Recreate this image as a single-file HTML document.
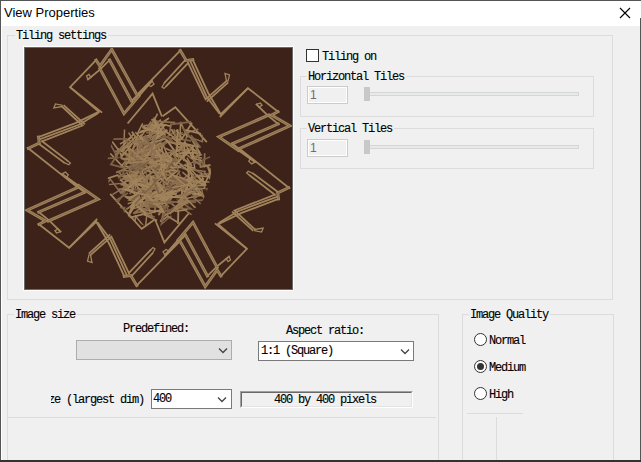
<!DOCTYPE html>
<html><head><meta charset="utf-8">
<style>
*{margin:0;padding:0;box-sizing:border-box}
html,body{width:641px;height:462px;overflow:hidden;background:#f0f0f0}
body{position:relative;font-family:"Liberation Mono",monospace;font-size:12px;color:#000}
.a{position:absolute}
.title{left:0;top:0;width:641px;height:26px;background:#fff;border-top:1px solid #555}
.ttext{left:4px;top:5px;font-family:"Liberation Sans",sans-serif;font-size:13px;color:#000;white-space:nowrap}
.gb{position:absolute;border:1px solid #dcdcdc}
.lbl{position:absolute;-webkit-text-stroke:0.12px #000;background:#f0f0f0;white-space:nowrap;letter-spacing:-1.2px;line-height:12px;padding:0 2px 0 1px}
.t{position:absolute;-webkit-text-stroke:0.12px #000;white-space:nowrap;letter-spacing:-1.2px;line-height:12px}
.edit{position:absolute;border:1px solid #cccccc;background:#f0f0f0;box-shadow:inset 1px 1px 0 #fff, inset -1px -1px 0 #fff}
.thumb{position:absolute;background:#c8c8c8}
.track{position:absolute;background:#e7eaea;border:1px solid #d6d6d6}
.combo{position:absolute;border:1px solid #7a7a7a;background:#fff}
.chev{position:absolute}
.radio{position:absolute;width:13px;height:13px;border:1px solid #333;border-radius:50%;background:#fff}
</style></head><body>
<div class="a title"></div>
<div class="a ttext">View Properties</div>
<!-- close X -->
<svg class="a" style="left:619px;top:7px" width="12" height="12" viewBox="0 0 12 12"><path d="M1 1L11 11M11 1L1 11" stroke="#000" stroke-width="1.1"/></svg>
<!-- right border -->
<div class="a" style="left:640px;top:18px;width:1px;height:444px;background:#555"></div>
<div class="a" style="left:0;top:0;width:1px;height:462px;background:#555"></div>
<div class="a" style="left:1px;top:26px;width:1px;height:436px;background:#fff"></div>


<!-- Tiling settings group -->
<div class="gb" style="left:7px;top:35px;width:606px;height:265px"></div>
<div class="lbl" style="left:15px;top:30px">Tiling settings</div>

<!-- image -->
<div class="a" style="left:23px;top:46px;width:271px;height:245px;background:#3c2218;border:1px solid #fff;box-shadow:inset 0 0 0 1px #6a6a6a"></div>
<svg class="a" style="left:25px;top:48px" width="267" height="241" viewBox="25 48 267 241" shape-rendering="auto">
<rect x="25" y="48" width="267" height="241" fill="#3c2218"/>
<g fill="none" stroke="#a2845c" stroke-linejoin="miter" stroke-linecap="square">
<path d="M101.4 112.1 L70.1 87.2 L96.1 60.1" stroke-width="1.8"/>
<path d="M96.1 60.1 L99.9 66.1 L111.8 49.4 L137.0 95.0" stroke-width="3.0"/>
<path d="M137.0 95.0 L180.3 50.5" stroke-width="1.8"/>
<path d="M180.3 50.5 L186.2 60.4 L192.7 59.7" stroke-width="3.0"/>
<path d="M192.7 59.7 L208.2 93.0 L220.8 114.2" stroke-width="1.8"/>
<path d="M190.4 61.3 L206.7 96.7 L219.0 113.0" stroke-width="1.8"/>
<path d="M220.8 114.2 L247.5 88.6" stroke-width="1.8"/>
<path d="M88.0 79.5 L99.9 69.7 L109.6 60.0" stroke-width="1.8"/>
<path d="M109.6 60.0 L131.5 101.0" stroke-width="3.0"/>
<path d="M131.5 101.0 L148.0 85.0" stroke-width="1.8"/>
<path d="M99.9 68.6 L124.0 113.6 L139.0 96.0" stroke-width="3.0"/>
<path d="M139.0 96.0 L152.0 81.0" stroke-width="1.8"/>
<path d="M164.7 82.5 L185.5 59.7" stroke-width="1.8"/>
<path d="M166.7 85.7 L188.1 63.0" stroke-width="1.8"/>
<path d="M188.1 63.0 L205.6 99.4 L226.5 81.0" stroke-width="1.8"/>
<path d="M207.5 101.0 L227.5 83.0" stroke-width="1.8"/>
<path d="M88.0 79.5 L86.5 76.0 L89.0 74.5 L91.0 77.5" stroke-width="1.3"/>
<path d="M152.0 81.0 L154.0 84.0 L151.0 86.5 L148.0 85.0" stroke-width="1.3"/>
<path d="M164.7 82.5 L162.0 87.0 L164.0 88.5 L166.7 85.7" stroke-width="1.3"/>
<path d="M226.5 81.0 L225.0 73.5 L229.5 75.0 L228.0 81.0" stroke-width="1.3"/>
<path d="M220.4 116.5 L248.0 88.2 L278.0 111.7" stroke-width="1.8"/>
<path d="M278.0 111.7 L271.4 115.1 L289.9 125.8 L239.4 148.6" stroke-width="3.0"/>
<path d="M239.4 148.6 L288.7 187.7" stroke-width="1.8"/>
<path d="M288.7 187.7 L277.7 193.0 L278.5 198.9" stroke-width="3.0"/>
<path d="M278.5 198.9 L241.6 212.9 L218.1 224.2" stroke-width="1.8"/>
<path d="M276.7 196.8 L237.5 211.5 L219.4 222.6" stroke-width="1.8"/>
<path d="M218.1 224.2 L246.5 248.3" stroke-width="1.8"/>
<path d="M256.5 104.4 L267.4 115.1 L278.2 123.9" stroke-width="1.8"/>
<path d="M278.2 123.9 L232.7 143.6" stroke-width="3.0"/>
<path d="M232.7 143.6 L250.5 158.5" stroke-width="1.8"/>
<path d="M268.6 115.1 L218.8 136.9 L238.3 150.4" stroke-width="3.0"/>
<path d="M238.3 150.4 L254.9 162.1" stroke-width="1.8"/>
<path d="M253.2 173.6 L278.5 192.4" stroke-width="1.8"/>
<path d="M249.7 175.4 L274.8 194.7" stroke-width="1.8"/>
<path d="M274.8 194.7 L234.5 210.5 L254.9 229.4" stroke-width="1.8"/>
<path d="M232.7 212.2 L252.7 230.3" stroke-width="1.8"/>
<path d="M256.5 104.4 L260.4 103.0 L262.1 105.3 L258.8 107.1" stroke-width="1.3"/>
<path d="M254.9 162.1 L251.6 163.9 L248.8 161.2 L250.5 158.5" stroke-width="1.3"/>
<path d="M253.2 173.6 L248.2 171.2 L246.6 173.0 L249.7 175.4" stroke-width="1.3"/>
<path d="M254.9 229.4 L263.2 228.0 L261.5 232.1 L254.9 230.7" stroke-width="1.3"/>
<path d="M215.6 223.9 L246.9 248.8 L220.9 275.9" stroke-width="1.8"/>
<path d="M220.9 275.9 L217.1 269.9 L205.2 286.6 L180.0 241.0" stroke-width="3.0"/>
<path d="M180.0 241.0 L136.7 285.5" stroke-width="1.8"/>
<path d="M136.7 285.5 L130.8 275.6 L124.3 276.3" stroke-width="3.0"/>
<path d="M124.3 276.3 L108.8 243.0 L96.2 221.8" stroke-width="1.8"/>
<path d="M126.6 274.7 L110.3 239.3 L98.0 223.0" stroke-width="1.8"/>
<path d="M96.2 221.8 L69.5 247.4" stroke-width="1.8"/>
<path d="M229.0 256.5 L217.1 266.3 L207.4 276.0" stroke-width="1.8"/>
<path d="M207.4 276.0 L185.5 235.0" stroke-width="3.0"/>
<path d="M185.5 235.0 L169.0 251.0" stroke-width="1.8"/>
<path d="M217.1 267.4 L193.0 222.4 L178.0 240.0" stroke-width="3.0"/>
<path d="M178.0 240.0 L165.0 255.0" stroke-width="1.8"/>
<path d="M152.3 253.5 L131.5 276.3" stroke-width="1.8"/>
<path d="M150.3 250.3 L128.9 273.0" stroke-width="1.8"/>
<path d="M128.9 273.0 L111.4 236.6 L90.5 255.0" stroke-width="1.8"/>
<path d="M109.5 235.0 L89.5 253.0" stroke-width="1.8"/>
<path d="M229.0 256.5 L230.5 260.0 L228.0 261.5 L226.0 258.5" stroke-width="1.3"/>
<path d="M165.0 255.0 L163.0 252.0 L166.0 249.5 L169.0 251.0" stroke-width="1.3"/>
<path d="M152.3 253.5 L155.0 249.0 L153.0 247.5 L150.3 250.3" stroke-width="1.3"/>
<path d="M90.5 255.0 L92.0 262.5 L87.5 261.0 L89.0 255.0" stroke-width="1.3"/>
<path d="M96.6 219.5 L69.0 247.8 L39.0 224.3" stroke-width="1.8"/>
<path d="M39.0 224.3 L45.6 220.9 L27.1 210.2 L77.6 187.4" stroke-width="3.0"/>
<path d="M77.6 187.4 L28.3 148.3" stroke-width="1.8"/>
<path d="M28.3 148.3 L39.3 143.0 L38.5 137.1" stroke-width="3.0"/>
<path d="M38.5 137.1 L75.4 123.1 L98.9 111.8" stroke-width="1.8"/>
<path d="M40.3 139.2 L79.5 124.5 L97.6 113.4" stroke-width="1.8"/>
<path d="M98.9 111.8 L70.5 87.7" stroke-width="1.8"/>
<path d="M60.5 231.6 L49.6 220.9 L38.8 212.1" stroke-width="1.8"/>
<path d="M38.8 212.1 L84.3 192.4" stroke-width="3.0"/>
<path d="M84.3 192.4 L66.5 177.5" stroke-width="1.8"/>
<path d="M48.4 220.9 L98.2 199.1 L78.7 185.6" stroke-width="3.0"/>
<path d="M78.7 185.6 L62.1 173.9" stroke-width="1.8"/>
<path d="M63.8 162.4 L38.5 143.6" stroke-width="1.8"/>
<path d="M67.3 160.6 L42.2 141.3" stroke-width="1.8"/>
<path d="M42.2 141.3 L82.5 125.5 L62.1 106.6" stroke-width="1.8"/>
<path d="M84.3 123.8 L64.3 105.7" stroke-width="1.8"/>
<path d="M60.5 231.6 L56.6 233.0 L54.9 230.7 L58.2 228.9" stroke-width="1.3"/>
<path d="M62.1 173.9 L65.4 172.1 L68.2 174.8 L66.5 177.5" stroke-width="1.3"/>
<path d="M63.8 162.4 L68.8 164.8 L70.4 163.0 L67.3 160.6" stroke-width="1.3"/>
<path d="M62.1 106.6 L53.8 108.0 L55.5 103.9 L62.1 105.3" stroke-width="1.3"/>
<path d="M128.2 122.8 L152.6 93.6 L161.6 115.7" stroke-width="1.8"/>
<path d="M163.3 115.7 L175.3 107.2 L206.2 141.5" stroke-width="1.8"/>
<path d="M188.8 213.2 L164.4 242.4 L155.4 220.3" stroke-width="1.8"/>
<path d="M153.7 220.3 L141.7 228.8 L110.8 194.5" stroke-width="1.8"/>
<clipPath id="bc"><ellipse cx="159" cy="168" rx="52.0" ry="60.0"/></clipPath>
<g clip-path="url(#bc)">
<path d="M155.0 173.0 L167.1 184.7 L172.9 173.9 L153.1 178.8" stroke-width="1.7" stroke="#9a7c56"/>
<path d="M171.9 178.6 L186.1 186.9 L172.0 195.0" stroke-width="1.9" stroke="#7d6246"/>
<path d="M159.0 183.2 L160.6 195.5 L166.2 189.2" stroke-width="1.7" stroke="#9a7c56"/>
<path d="M174.5 138.4 L190.3 140.7" stroke-width="1.7" stroke="#7d6246"/>
<path d="M124.3 150.3 L115.5 151.3" stroke-width="1.9" stroke="#8c7050"/>
<path d="M154.6 136.1 L162.3 134.0 L155.6 138.8" stroke-width="1.9" stroke="#a2845c"/>
<path d="M154.1 118.0 L158.8 124.7 L144.5 125.4" stroke-width="1.5" stroke="#9a7c56"/>
<path d="M132.4 132.4 L144.2 149.0 L147.3 140.1 L136.5 144.3" stroke-width="1.9" stroke="#9a7c56"/>
<path d="M141.6 134.5 L134.6 143.0 L143.3 140.6" stroke-width="1.5" stroke="#a2845c"/>
<path d="M131.8 153.9 L121.2 166.2 L134.2 166.7" stroke-width="1.5" stroke="#a2845c"/>
<path d="M157.5 190.0 L167.8 206.1 L150.2 206.6" stroke-width="1.7" stroke="#a2845c"/>
<path d="M189.5 174.3 L183.0 189.9" stroke-width="1.9" stroke="#7d6246"/>
<path d="M149.6 190.5 L145.5 206.4 L126.2 197.0" stroke-width="1.9" stroke="#9a7c56"/>
<path d="M142.3 184.8 L162.6 187.1 L155.1 195.8 L158.0 177.5" stroke-width="1.7" stroke="#8c7050"/>
<path d="M166.0 148.6 L183.7 156.7 L181.2 145.2" stroke-width="1.7" stroke="#9a7c56"/>
<path d="M173.5 188.6 L162.3 202.1" stroke-width="1.7" stroke="#a2845c"/>
<path d="M170.8 157.5 L182.6 165.5" stroke-width="1.9" stroke="#8c7050"/>
<path d="M133.7 164.5 L143.9 170.5 L123.6 176.8" stroke-width="1.9" stroke="#8c7050"/>
<path d="M177.7 130.0 L167.1 136.8 L182.2 150.1 L188.8 130.6" stroke-width="1.9" stroke="#7d6246"/>
<path d="M139.0 188.8 L153.7 187.2 L143.8 169.6" stroke-width="1.5" stroke="#7d6246"/>
<path d="M174.7 208.6 L190.8 208.8 L179.2 200.6 L195.0 202.1" stroke-width="1.9" stroke="#7d6246"/>
<path d="M143.2 155.1 L136.8 163.8 L153.2 162.7 L147.0 156.8" stroke-width="1.9" stroke="#a2845c"/>
<path d="M158.2 186.1 L169.1 189.7 L160.9 201.1" stroke-width="1.5" stroke="#8c7050"/>
<path d="M152.2 119.9 L157.4 126.3 L144.6 128.5" stroke-width="1.9" stroke="#a2845c"/>
<path d="M188.6 179.4 L203.2 174.3 L185.8 164.6" stroke-width="1.9" stroke="#7d6246"/>
<path d="M192.8 148.6 L204.1 165.7 L204.7 154.1" stroke-width="1.7" stroke="#8c7050"/>
<path d="M133.9 179.8 L120.8 192.0" stroke-width="1.9" stroke="#8c7050"/>
<path d="M184.4 165.2 L194.7 168.2 L192.6 148.5" stroke-width="1.5" stroke="#a2845c"/>
<path d="M128.3 185.1 L121.0 193.3 L110.2 179.1 L102.6 191.3" stroke-width="1.5" stroke="#8c7050"/>
<path d="M125.0 196.2 L139.5 200.1 L128.4 203.5" stroke-width="1.5" stroke="#9a7c56"/>
<path d="M128.2 150.0 L135.0 155.9 L126.2 159.2" stroke-width="1.9" stroke="#a2845c"/>
<path d="M173.0 150.8 L190.7 149.4 L183.2 153.0" stroke-width="1.7" stroke="#9a7c56"/>
<path d="M150.7 122.0 L139.0 140.1 L157.7 135.0 L142.9 125.9" stroke-width="1.5" stroke="#9a7c56"/>
<path d="M156.6 133.9 L171.3 138.6 L162.1 146.4" stroke-width="1.7" stroke="#7d6246"/>
<path d="M166.2 180.3 L182.2 178.2" stroke-width="1.5" stroke="#9a7c56"/>
<path d="M177.4 142.1 L198.6 146.8 L193.3 138.8" stroke-width="1.5" stroke="#a2845c"/>
<path d="M147.0 132.5 L165.8 133.8 L149.5 125.5" stroke-width="1.9" stroke="#7d6246"/>
<path d="M182.9 179.5 L197.5 191.0 L190.2 177.8" stroke-width="1.5" stroke="#a2845c"/>
<path d="M135.7 144.8 L127.3 156.9 L142.2 158.1 L134.7 153.0" stroke-width="1.9" stroke="#8c7050"/>
<path d="M154.3 191.7 L145.4 204.6 L158.6 204.4" stroke-width="1.7" stroke="#a2845c"/>
<path d="M162.7 160.2 L160.0 172.3" stroke-width="1.7" stroke="#7d6246"/>
<path d="M140.8 131.3 L154.4 127.6 L150.2 137.8" stroke-width="1.7" stroke="#a2845c"/>
<path d="M147.5 156.6 L156.0 162.7 L144.2 160.9" stroke-width="1.5" stroke="#8c7050"/>
<path d="M164.7 213.6 L160.5 221.8 L167.8 216.3" stroke-width="1.9" stroke="#9a7c56"/>
<path d="M137.6 139.0 L123.7 149.5 L124.5 130.3" stroke-width="1.5" stroke="#9a7c56"/>
<path d="M148.8 125.9 L150.3 139.7" stroke-width="1.5" stroke="#8c7050"/>
<path d="M131.1 137.4 L120.6 143.7" stroke-width="1.5" stroke="#a2845c"/>
<path d="M157.4 197.0 L171.6 197.9 L158.9 214.3" stroke-width="1.9" stroke="#9a7c56"/>
<path d="M188.7 165.5 L194.7 184.6 L173.5 186.3 L190.7 177.9" stroke-width="1.5" stroke="#8c7050"/>
<path d="M193.0 162.0 L183.4 168.5 L205.1 171.5" stroke-width="1.5" stroke="#8c7050"/>
<path d="M165.0 134.8 L155.6 148.5 L171.1 140.0" stroke-width="1.9" stroke="#7d6246"/>
<path d="M133.2 185.2 L154.4 183.9 L148.5 196.3" stroke-width="1.9" stroke="#a2845c"/>
<path d="M147.2 185.7 L154.9 188.4 L141.0 193.0 L147.3 180.0" stroke-width="1.9" stroke="#8c7050"/>
<path d="M169.7 210.7 L162.2 218.3 L164.2 205.8" stroke-width="1.9" stroke="#7d6246"/>
<path d="M154.5 155.2 L161.6 163.3 L158.3 147.3" stroke-width="1.5" stroke="#8c7050"/>
<path d="M199.9 160.4 L214.2 172.5 L193.7 176.4" stroke-width="1.9" stroke="#7d6246"/>
<path d="M172.5 177.9 L183.3 178.5 L166.3 188.1 L178.9 197.1" stroke-width="1.7" stroke="#8c7050"/>
<path d="M165.2 136.8 L146.8 140.7 L156.4 153.6" stroke-width="1.7" stroke="#7d6246"/>
<path d="M155.9 129.4 L145.6 130.3 L152.0 123.0" stroke-width="1.7" stroke="#8c7050"/>
<path d="M180.7 153.3 L199.6 152.7 L190.9 137.7" stroke-width="1.9" stroke="#a2845c"/>
<path d="M130.3 158.2 L123.9 167.9 L110.9 154.1" stroke-width="1.7" stroke="#a2845c"/>
<path d="M156.5 158.1 L175.9 161.6 L166.9 165.0 L182.2 166.4" stroke-width="1.5" stroke="#7d6246"/>
<path d="M193.2 146.6 L185.7 155.2" stroke-width="1.7" stroke="#a2845c"/>
<path d="M157.0 127.5 L137.6 133.2 L142.4 124.0" stroke-width="1.5" stroke="#a2845c"/>
<path d="M160.6 130.0 L152.0 139.1" stroke-width="1.7" stroke="#9a7c56"/>
<path d="M128.9 186.2 L122.0 193.5 L125.0 183.1 L105.4 184.9" stroke-width="1.5" stroke="#8c7050"/>
<path d="M170.4 186.8 L168.1 198.9" stroke-width="1.7" stroke="#9a7c56"/>
<path d="M176.9 130.5 L182.0 138.7 L191.6 123.4" stroke-width="1.7" stroke="#a2845c"/>
<path d="M166.6 139.9 L179.3 157.5 L171.4 153.1 L166.2 168.5" stroke-width="1.9" stroke="#a2845c"/>
<path d="M132.9 134.9 L118.9 150.4 L106.4 134.2 L98.2 147.6" stroke-width="1.7" stroke="#a2845c"/>
<path d="M160.4 167.6 L166.5 174.9 L152.8 178.7" stroke-width="1.9" stroke="#8c7050"/>
<path d="M138.8 171.4 L120.7 180.4 L134.4 189.7 L119.4 189.1" stroke-width="1.5" stroke="#a2845c"/>
<path d="M170.7 174.9 L160.9 190.9 L147.6 176.6" stroke-width="1.5" stroke="#8c7050"/>
<path d="M158.7 182.9 L165.8 189.7" stroke-width="1.7" stroke="#a2845c"/>
<path d="M161.1 126.1 L169.4 134.2 L170.9 125.1" stroke-width="1.7" stroke="#8c7050"/>
<path d="M120.3 157.3 L137.4 167.9 L137.0 148.9 L127.8 155.7" stroke-width="1.7" stroke="#8c7050"/>
<path d="M166.9 193.0 L182.1 189.5 L181.6 207.2" stroke-width="1.9" stroke="#a2845c"/>
<path d="M160.6 191.2 L160.3 200.0 L149.6 196.0" stroke-width="1.7" stroke="#9a7c56"/>
<path d="M154.8 202.5 L141.0 211.6 L137.4 202.2 L127.0 208.9" stroke-width="1.9" stroke="#8c7050"/>
<path d="M160.4 171.8 L151.4 182.1 L149.7 169.2 L139.2 176.6" stroke-width="1.5" stroke="#9a7c56"/>
<path d="M164.5 197.9 L178.0 208.8 L163.0 216.4" stroke-width="1.5" stroke="#9a7c56"/>
<path d="M158.4 166.0 L172.8 163.2 L160.7 149.8" stroke-width="1.7" stroke="#8c7050"/>
<path d="M157.2 142.7 L138.6 151.9 L138.6 138.7" stroke-width="1.7" stroke="#7d6246"/>
<path d="M144.2 154.3 L165.4 156.4 L160.0 173.5" stroke-width="1.9" stroke="#a2845c"/>
<path d="M169.1 158.1 L177.4 160.3 L170.5 150.7 L192.1 149.2" stroke-width="1.7" stroke="#8c7050"/>
<path d="M138.7 139.0 L154.4 133.3" stroke-width="1.5" stroke="#a2845c"/>
<path d="M143.3 188.6 L153.9 201.5 L142.5 197.6" stroke-width="1.9" stroke="#9a7c56"/>
<path d="M136.9 141.9 L147.1 158.5" stroke-width="1.7" stroke="#9a7c56"/>
<path d="M120.4 179.2 L138.4 177.9 L130.1 193.4" stroke-width="1.5" stroke="#8c7050"/>
<path d="M164.7 159.1 L173.4 169.0 L163.3 172.2" stroke-width="1.9" stroke="#8c7050"/>
<path d="M139.5 144.1 L146.1 151.9" stroke-width="1.5" stroke="#7d6246"/>
<path d="M146.9 170.8 L159.8 173.9 L144.4 187.0" stroke-width="1.9" stroke="#9a7c56"/>
<path d="M149.7 186.4 L146.8 206.5 L135.5 201.1" stroke-width="1.9" stroke="#8c7050"/>
<path d="M140.0 157.0 L144.7 164.6 L137.1 162.0" stroke-width="1.5" stroke="#9a7c56"/>
<path d="M157.7 158.5 L152.1 167.5 L153.5 145.6" stroke-width="1.9" stroke="#a2845c"/>
<path d="M123.3 152.9 L139.9 166.5" stroke-width="1.7" stroke="#8c7050"/>
<path d="M183.6 190.5 L187.8 203.5 L167.2 201.0 L167.8 211.0" stroke-width="1.7" stroke="#7d6246"/>
<path d="M185.1 153.5 L177.8 162.6" stroke-width="1.5" stroke="#a2845c"/>
<path d="M179.4 171.6 L171.8 183.4 L180.5 183.2" stroke-width="1.9" stroke="#8c7050"/>
<path d="M122.6 175.9 L140.6 181.6 L134.7 174.9 L146.0 180.3" stroke-width="1.9" stroke="#a2845c"/>
<path d="M129.4 180.5 L144.5 181.7 L140.4 163.8 L153.8 169.6" stroke-width="1.7" stroke="#a2845c"/>
<path d="M160.3 120.2 L148.8 130.6 L157.2 114.4" stroke-width="1.7" stroke="#9a7c56"/>
<path d="M180.2 206.7 L195.8 217.9" stroke-width="1.5" stroke="#8c7050"/>
<path d="M190.1 188.2 L204.9 188.5 L201.4 173.2" stroke-width="1.5" stroke="#9a7c56"/>
<path d="M188.8 194.1 L181.2 199.6 L202.1 195.2" stroke-width="1.5" stroke="#9a7c56"/>
<path d="M132.3 155.9 L145.7 171.0 L147.6 149.2" stroke-width="1.7" stroke="#7d6246"/>
<path d="M172.3 137.9 L181.7 145.1 L165.7 141.1" stroke-width="1.5" stroke="#a2845c"/>
<path d="M175.1 190.6 L166.2 200.4 L162.7 191.2 L162.1 204.0" stroke-width="1.9" stroke="#a2845c"/>
<path d="M140.9 204.3 L151.7 203.9 L141.7 214.1 L154.1 216.8" stroke-width="1.7" stroke="#7d6246"/>
<path d="M168.3 118.5 L160.5 123.8 L169.6 125.9" stroke-width="1.7" stroke="#a2845c"/>
<path d="M148.5 189.3 L141.1 201.9 L131.5 190.2" stroke-width="1.9" stroke="#a2845c"/>
<path d="M186.6 182.0 L201.9 181.6 L188.9 166.9" stroke-width="1.5" stroke="#a2845c"/>
<path d="M131.0 181.9 L144.7 184.9" stroke-width="1.7" stroke="#a2845c"/>
<path d="M126.1 158.3 L123.1 174.0" stroke-width="1.9" stroke="#7d6246"/>
<path d="M141.7 194.7 L157.2 191.7 L154.7 212.1" stroke-width="1.9" stroke="#8c7050"/>
<path d="M151.1 178.2 L160.6 193.9" stroke-width="1.9" stroke="#a2845c"/>
<path d="M151.0 166.3 L163.0 168.7 L160.6 159.4 L174.9 163.3" stroke-width="1.9" stroke="#a2845c"/>
<path d="M150.1 146.9 L163.1 146.3 L158.7 154.9 L158.3 146.0" stroke-width="1.7" stroke="#8c7050"/>
<path d="M173.7 188.3 L186.9 188.5" stroke-width="1.9" stroke="#7d6246"/>
<path d="M197.7 153.6 L194.5 163.6 L211.5 156.3" stroke-width="1.5" stroke="#7d6246"/>
<path d="M166.5 197.8 L153.2 200.2" stroke-width="1.7" stroke="#a2845c"/>
<path d="M143.7 198.9 L130.5 209.3 L146.9 205.2 L131.6 196.7" stroke-width="1.5" stroke="#9a7c56"/>
<path d="M152.1 185.0 L165.2 187.6 L148.2 196.6" stroke-width="1.9" stroke="#a2845c"/>
<path d="M146.9 200.2 L141.1 207.5 L137.8 188.1" stroke-width="1.7" stroke="#9a7c56"/>
<path d="M151.2 206.7 L166.4 206.6 L161.3 224.3 L170.9 216.2" stroke-width="1.5" stroke="#7d6246"/>
<path d="M148.7 197.3 L161.6 209.6 L144.6 214.7 L156.3 220.2" stroke-width="1.7" stroke="#a2845c"/>
<path d="M184.4 142.5 L201.1 154.8 L192.1 158.1 L201.2 160.5" stroke-width="1.5" stroke="#a2845c"/>
<path d="M130.4 166.0 L120.6 171.9" stroke-width="1.5" stroke="#7d6246"/>
<path d="M127.1 193.5 L109.1 204.9" stroke-width="1.9" stroke="#7d6246"/>
<path d="M126.3 152.8 L134.4 165.2 L116.6 172.2" stroke-width="1.5" stroke="#8c7050"/>
<path d="M168.2 171.4 L161.5 177.0 L163.9 161.6" stroke-width="1.7" stroke="#7d6246"/>
<path d="M178.3 211.4 L178.0 223.6" stroke-width="1.9" stroke="#a2845c"/>
<path d="M133.4 153.7 L144.8 161.5" stroke-width="1.9" stroke="#a2845c"/>
<path d="M153.7 184.9 L163.3 187.6 L163.5 172.8 L151.8 176.4" stroke-width="1.7" stroke="#8c7050"/>
<path d="M158.1 176.1 L146.3 194.0 L158.0 197.5" stroke-width="1.5" stroke="#9a7c56"/>
<path d="M174.8 169.0 L169.4 190.0 L181.4 185.6" stroke-width="1.5" stroke="#7d6246"/>
<path d="M121.0 154.0 L131.8 155.1 L126.9 141.2" stroke-width="1.9" stroke="#7d6246"/>
<path d="M167.0 174.4 L156.0 187.9 L165.1 187.4" stroke-width="1.5" stroke="#9a7c56"/>
<path d="M163.8 130.8 L179.9 140.9 L180.5 121.9 L186.9 136.4" stroke-width="1.5" stroke="#a2845c"/>
<path d="M158.9 155.0 L179.5 150.7 L178.4 160.6" stroke-width="1.5" stroke="#8c7050"/>
<path d="M128.4 184.8 L110.6 195.8" stroke-width="1.5" stroke="#8c7050"/>
<path d="M177.9 184.6 L198.9 181.3 L191.9 177.0" stroke-width="1.9" stroke="#8c7050"/>
<path d="M130.5 150.0 L146.0 155.4 L137.1 161.2" stroke-width="1.5" stroke="#9a7c56"/>
<path d="M181.1 157.1 L187.9 161.8" stroke-width="1.7" stroke="#a2845c"/>
<path d="M156.1 135.3 L150.1 145.1 L143.8 137.3 L160.0 136.4" stroke-width="1.7" stroke="#8c7050"/>
<path d="M173.9 179.2 L159.3 194.3 L153.3 179.3" stroke-width="1.7" stroke="#7d6246"/>
<path d="M170.7 180.4 L187.7 183.3" stroke-width="1.9" stroke="#9a7c56"/>
<path d="M121.7 148.9 L130.4 146.0" stroke-width="1.7" stroke="#a2845c"/>
<path d="M138.4 207.3 L148.0 210.4 L133.3 213.4 L147.1 203.4" stroke-width="1.9" stroke="#8c7050"/>
<path d="M174.5 196.7 L192.1 192.7 L184.0 191.0" stroke-width="1.9" stroke="#9a7c56"/>
<path d="M195.3 181.4 L206.2 185.2 L189.5 185.7" stroke-width="1.9" stroke="#a2845c"/>
<path d="M153.6 157.8 L164.6 155.9 L163.6 176.3 L158.1 166.5" stroke-width="1.9" stroke="#9a7c56"/>
<path d="M143.5 144.3 L127.3 157.6 L146.9 166.0" stroke-width="1.5" stroke="#7d6246"/>
<path d="M126.2 138.8 L107.6 139.2 L117.7 157.7 L105.2 158.6" stroke-width="1.7" stroke="#7d6246"/>
<path d="M161.3 211.9 L170.8 210.1" stroke-width="1.7" stroke="#7d6246"/>
<path d="M166.2 159.0 L179.5 167.4 L163.3 167.5" stroke-width="1.9" stroke="#a2845c"/>
<path d="M176.3 162.7 L178.0 170.5" stroke-width="1.7" stroke="#8c7050"/>
<path d="M200.6 166.8 L209.7 165.2" stroke-width="1.9" stroke="#9a7c56"/>
<path d="M150.8 155.3 L164.3 172.5 L149.3 164.7 L158.4 158.4" stroke-width="1.5" stroke="#7d6246"/>
<path d="M139.5 137.7 L129.6 155.3 L144.1 153.3 L132.5 166.4" stroke-width="1.5" stroke="#8c7050"/>
<path d="M141.9 189.4 L129.3 199.9 L150.8 202.9" stroke-width="1.7" stroke="#a2845c"/>
<path d="M187.6 151.4 L175.3 165.3 L166.1 152.1" stroke-width="1.7" stroke="#a2845c"/>
<path d="M166.6 188.2 L188.1 184.4 L173.4 177.6" stroke-width="1.9" stroke="#7d6246"/>
<path d="M161.4 166.5 L146.8 176.1 L161.0 178.7 L143.6 191.1" stroke-width="1.5" stroke="#a2845c"/>
<path d="M117.8 171.6 L129.9 182.1 L129.6 168.6" stroke-width="1.7" stroke="#8c7050"/>
<path d="M193.5 180.7 L213.4 182.4 L204.6 172.8" stroke-width="1.5" stroke="#9a7c56"/>
<path d="M140.6 167.5 L125.5 181.2 L145.8 177.0 L133.2 166.4" stroke-width="1.7" stroke="#8c7050"/>
<path d="M157.2 122.9 L157.5 135.4" stroke-width="1.7" stroke="#9a7c56"/>
<path d="M131.8 144.3 L121.7 156.5 L118.2 149.2" stroke-width="1.5" stroke="#a2845c"/>
<path d="M147.6 158.6 L160.4 167.7 L145.4 168.5" stroke-width="1.7" stroke="#7d6246"/>
<path d="M156.4 169.9 L155.1 182.0 L161.4 176.2" stroke-width="1.5" stroke="#7d6246"/>
<path d="M190.0 200.6 L210.3 200.0 L207.1 189.0" stroke-width="1.9" stroke="#7d6246"/>
<path d="M147.0 212.5 L145.4 228.3 L135.6 216.1 L134.4 226.5" stroke-width="1.5" stroke="#9a7c56"/>
<path d="M135.2 161.7 L133.7 172.7" stroke-width="1.5" stroke="#7d6246"/>
<path d="M145.0 212.8 L152.4 217.6 L146.1 200.7" stroke-width="1.9" stroke="#8c7050"/>
<path d="M191.5 181.5 L177.5 190.5" stroke-width="1.7" stroke="#9a7c56"/>
<path d="M190.8 182.7 L196.5 197.9 L184.1 185.6" stroke-width="1.9" stroke="#8c7050"/>
<path d="M149.0 210.6 L163.8 212.1 L156.1 197.9" stroke-width="1.5" stroke="#a2845c"/>
<path d="M148.2 150.0 L163.6 157.7 L160.9 143.2 L142.7 151.7" stroke-width="1.7" stroke="#9a7c56"/>
<path d="M135.9 160.6 L129.3 168.2" stroke-width="1.5" stroke="#8c7050"/>
<path d="M190.7 155.1 L201.5 158.1" stroke-width="1.5" stroke="#9a7c56"/>
<path d="M133.8 181.0 L146.9 190.2 L147.4 175.6 L144.1 183.3" stroke-width="1.7" stroke="#9a7c56"/>
<path d="M141.3 145.6 L135.6 155.8" stroke-width="1.5" stroke="#8c7050"/>
<path d="M169.8 203.5 L185.5 199.3 L169.3 210.6" stroke-width="1.5" stroke="#7d6246"/>
<path d="M150.9 173.4 L144.3 184.0 L135.8 172.6" stroke-width="1.7" stroke="#8c7050"/>
<path d="M162.6 143.3 L168.8 159.1 L157.4 146.5" stroke-width="1.5" stroke="#9a7c56"/>
<path d="M131.9 163.3 L143.6 177.2 L126.9 176.5" stroke-width="1.9" stroke="#8c7050"/>
<path d="M174.6 159.2 L166.9 169.9" stroke-width="1.9" stroke="#7d6246"/>
<path d="M174.4 171.8 L164.4 176.7 L183.2 183.1 L179.4 174.1" stroke-width="1.7" stroke="#7d6246"/>
<path d="M191.3 172.4 L176.8 184.4 L176.5 176.3 L184.0 189.0" stroke-width="1.5" stroke="#8c7050"/>
<path d="M147.2 153.5 L160.1 149.6 L146.9 161.2" stroke-width="1.5" stroke="#a2845c"/>
<path d="M175.9 170.3 L157.4 172.6 L165.7 163.4" stroke-width="1.5" stroke="#a2845c"/>
<path d="M129.0 133.2 L136.0 143.8 L137.5 135.2" stroke-width="1.5" stroke="#9a7c56"/>
<path d="M182.5 127.9 L196.0 143.7" stroke-width="1.7" stroke="#7d6246"/>
<path d="M171.0 124.4 L190.3 121.9" stroke-width="1.9" stroke="#7d6246"/>
<path d="M137.9 172.2 L121.9 184.5 L131.3 186.9 L129.4 175.7" stroke-width="1.9" stroke="#9a7c56"/>
<path d="M147.6 153.9 L158.6 151.0 L144.1 163.2 L157.0 163.4" stroke-width="1.7" stroke="#8c7050"/>
<path d="M187.9 155.6 L200.8 165.5 L195.4 144.5" stroke-width="1.7" stroke="#8c7050"/>
<path d="M175.8 211.2 L186.6 209.8" stroke-width="1.5" stroke="#a2845c"/>
<path d="M152.2 125.3 L164.7 125.0 L158.0 134.5" stroke-width="1.9" stroke="#a2845c"/>
<path d="M127.6 197.8 L139.3 194.4 L129.5 212.4" stroke-width="1.9" stroke="#a2845c"/>
<path d="M156.7 194.8 L176.1 193.6" stroke-width="1.7" stroke="#a2845c"/>
<path d="M153.9 163.5 L147.4 168.3 L140.1 149.3 L129.6 162.7" stroke-width="1.9" stroke="#8c7050"/>
<path d="M153.0 121.2 L174.4 122.6" stroke-width="1.7" stroke="#8c7050"/>
<path d="M157.0 183.0 L165.2 193.2" stroke-width="1.5" stroke="#a2845c"/>
<path d="M156.8 129.7 L140.5 143.7 L153.4 146.3 L136.7 159.5" stroke-width="1.9" stroke="#8c7050"/>
<path d="M129.9 169.6 L134.4 176.7 L124.9 178.2" stroke-width="1.9" stroke="#9a7c56"/>
<path d="M145.3 135.4 L150.4 144.8 L141.2 143.2" stroke-width="1.7" stroke="#7d6246"/>
<path d="M122.4 146.8 L111.0 164.4 L122.8 167.7" stroke-width="1.9" stroke="#7d6246"/>
<path d="M134.1 206.8 L127.0 218.4 L145.9 213.6 L135.6 204.6" stroke-width="1.7" stroke="#a2845c"/>
<path d="M182.1 147.7 L169.9 155.4" stroke-width="1.7" stroke="#9a7c56"/>
<path d="M124.8 179.3 L142.8 175.9" stroke-width="1.7" stroke="#8c7050"/>
<path d="M183.0 172.6 L194.0 182.0 L187.4 163.6" stroke-width="1.5" stroke="#9a7c56"/>
<path d="M117.6 175.1 L99.1 181.3 L97.6 170.2" stroke-width="1.7" stroke="#a2845c"/>
<path d="M151.4 163.2 L162.4 159.8 L151.2 142.8 L164.9 138.9" stroke-width="1.9" stroke="#a2845c"/>
<path d="M132.3 155.4 L131.4 173.3 L145.4 163.6" stroke-width="1.7" stroke="#7d6246"/>
<path d="M171.9 130.0 L177.6 139.8" stroke-width="1.7" stroke="#a2845c"/>
<path d="M154.3 144.8 L144.1 160.1 L165.0 165.7" stroke-width="1.9" stroke="#a2845c"/>
<path d="M187.7 201.9 L176.2 209.1" stroke-width="1.9" stroke="#9a7c56"/>
<path d="M188.8 136.9 L202.4 141.7 L202.5 127.6 L181.9 134.6" stroke-width="1.5" stroke="#8c7050"/>
<path d="M166.6 130.4 L156.5 138.5 L158.7 125.8" stroke-width="1.9" stroke="#a2845c"/>
<path d="M173.1 177.6 L188.6 183.1" stroke-width="1.9" stroke="#7d6246"/>
<path d="M186.8 179.5 L200.6 194.7 L185.1 191.9 L191.6 177.3" stroke-width="1.9" stroke="#a2845c"/>
<path d="M165.4 191.4 L153.8 203.5 L166.0 203.3" stroke-width="1.7" stroke="#9a7c56"/>
<path d="M192.2 146.2 L192.7 159.0 L184.7 141.9 L183.8 160.3" stroke-width="1.5" stroke="#a2845c"/>
<path d="M182.1 132.8 L175.5 138.7 L174.2 129.8" stroke-width="1.5" stroke="#8c7050"/>
<path d="M142.4 177.7 L134.6 182.7 L149.1 187.5" stroke-width="1.9" stroke="#a2845c"/>
<path d="M186.3 130.1 L200.2 133.7" stroke-width="1.9" stroke="#a2845c"/>
<path d="M194.7 184.8 L204.2 196.7 L188.0 189.7 L203.3 178.8" stroke-width="1.5" stroke="#a2845c"/>
<path d="M199.5 175.9 L211.2 176.8 L208.0 167.3" stroke-width="1.9" stroke="#9a7c56"/>
<path d="M151.8 171.8 L164.7 171.2" stroke-width="1.5" stroke="#8c7050"/>
<path d="M144.1 202.1 L165.0 202.1" stroke-width="1.7" stroke="#8c7050"/>
<path d="M122.6 146.5 L115.6 154.8" stroke-width="1.9" stroke="#8c7050"/>
<path d="M125.1 170.4 L140.9 173.3 L135.4 188.0" stroke-width="1.5" stroke="#9a7c56"/>
<path d="M135.8 136.9 L121.2 150.7 L135.3 160.0 L121.9 158.5" stroke-width="1.9" stroke="#9a7c56"/>
<path d="M167.9 164.6 L158.8 178.0 L149.8 166.2" stroke-width="1.5" stroke="#9a7c56"/>
<path d="M191.5 135.7 L200.3 146.9" stroke-width="1.5" stroke="#7d6246"/>
<path d="M140.0 193.9 L130.3 207.4 L147.3 196.1" stroke-width="1.9" stroke="#a2845c"/>
<path d="M180.5 165.0 L193.2 174.7" stroke-width="1.9" stroke="#9a7c56"/>
<path d="M177.5 130.7 L177.0 150.9" stroke-width="1.9" stroke="#a2845c"/>
<path d="M125.1 191.9 L113.7 208.2 L124.7 207.6 L121.9 226.7" stroke-width="1.5" stroke="#7d6246"/>
<path d="M165.4 141.6 L150.6 153.0 L156.3 134.5" stroke-width="1.7" stroke="#8c7050"/>
<path d="M197.1 175.2 L205.0 183.5 L212.3 167.7" stroke-width="1.7" stroke="#a2845c"/>
<path d="M186.6 200.5 L175.3 207.5" stroke-width="1.9" stroke="#9a7c56"/>
<path d="M189.6 189.0 L178.1 202.2" stroke-width="1.9" stroke="#9a7c56"/>
<path d="M143.2 127.6 L163.7 133.9 L153.7 119.5" stroke-width="1.9" stroke="#a2845c"/>
<path d="M132.0 188.6 L143.9 191.0 L131.7 200.3" stroke-width="1.9" stroke="#7d6246"/>
<path d="M168.8 171.9 L185.4 185.2 L172.9 187.5" stroke-width="1.5" stroke="#a2845c"/>
<path d="M118.5 176.1 L135.8 175.4 L131.9 192.4" stroke-width="1.9" stroke="#9a7c56"/>
<path d="M179.5 156.2 L191.9 166.2 L187.2 158.2" stroke-width="1.5" stroke="#9a7c56"/>
<path d="M148.0 145.6 L138.2 153.4 L136.1 138.4 L132.8 149.2" stroke-width="1.5" stroke="#9a7c56"/>
<path d="M136.5 160.8 L147.8 161.7 L139.4 173.0" stroke-width="1.7" stroke="#7d6246"/>
<path d="M150.1 159.3 L155.1 167.1 L161.4 161.1" stroke-width="1.5" stroke="#9a7c56"/>
<path d="M125.8 163.1 L145.3 161.6 L129.4 148.3 L129.1 161.3" stroke-width="1.7" stroke="#9a7c56"/>
<path d="M135.8 132.8 L143.4 140.3" stroke-width="1.5" stroke="#a2845c"/>
<path d="M174.9 175.6 L189.1 180.7 L187.4 162.4" stroke-width="1.5" stroke="#a2845c"/>
<path d="M192.0 196.5 L205.9 208.1 L201.6 188.8 L183.9 196.5" stroke-width="1.5" stroke="#8c7050"/>
<path d="M169.4 142.3 L187.9 145.3 L176.5 147.7" stroke-width="1.7" stroke="#9a7c56"/>
<path d="M143.6 169.5 L157.9 164.4 L144.3 155.6" stroke-width="1.7" stroke="#9a7c56"/>
<path d="M177.0 171.1 L166.1 179.9 L160.8 168.0" stroke-width="1.5" stroke="#a2845c"/>
<path d="M127.0 173.2 L141.4 191.5" stroke-width="1.5" stroke="#a2845c"/>
<path d="M183.5 195.9 L194.8 207.2" stroke-width="1.9" stroke="#9a7c56"/>
<path d="M155.5 181.7 L135.4 203.7" stroke-width="1.5" stroke="#7d6246"/>
<path d="M136.8 179.1 L126.6 190.2 L145.7 194.9" stroke-width="1.9" stroke="#a2845c"/>
<path d="M182.6 200.4 L170.1 213.5" stroke-width="1.9" stroke="#9a7c56"/>
<path d="M139.5 164.4 L118.7 177.9" stroke-width="1.7" stroke="#7d6246"/>
<path d="M197.6 185.8 L182.0 195.4" stroke-width="1.7" stroke="#8c7050"/>
<path d="M154.8 195.8 L180.6 197.4" stroke-width="1.9" stroke="#a2845c"/>
<path d="M167.7 216.2 L188.6 228.9 L170.2 241.0" stroke-width="1.9" stroke="#9a7c56"/>
<path d="M128.1 140.3 L151.9 144.3" stroke-width="1.7" stroke="#8c7050"/>
</g>
</g>
<g fill="none" stroke="#7a5f44" stroke-width="0.7">
<path d="M96.1 60.1 L99.9 66.1 L111.8 49.4 L137.0 95.0"/>
<path d="M180.3 50.5 L186.2 60.4 L192.7 59.7"/>
<path d="M109.6 60.0 L131.5 101.0"/>
<path d="M99.9 68.6 L124.0 113.6 L139.0 96.0"/>
<path d="M278.0 111.7 L271.4 115.1 L289.9 125.8 L239.4 148.6"/>
<path d="M288.7 187.7 L277.7 193.0 L278.5 198.9"/>
<path d="M278.2 123.9 L232.7 143.6"/>
<path d="M268.6 115.1 L218.8 136.9 L238.3 150.4"/>
<path d="M220.9 275.9 L217.1 269.9 L205.2 286.6 L180.0 241.0"/>
<path d="M136.7 285.5 L130.8 275.6 L124.3 276.3"/>
<path d="M207.4 276.0 L185.5 235.0"/>
<path d="M217.1 267.4 L193.0 222.4 L178.0 240.0"/>
<path d="M39.0 224.3 L45.6 220.9 L27.1 210.2 L77.6 187.4"/>
<path d="M28.3 148.3 L39.3 143.0 L38.5 137.1"/>
<path d="M38.8 212.1 L84.3 192.4"/>
<path d="M48.4 220.9 L98.2 199.1 L78.7 185.6"/>
</g></svg>

<!-- checkbox -->
<div class="a" style="left:306px;top:49px;width:13px;height:13px;border:1px solid #333;background:#fff"></div>
<div class="t" style="left:322px;top:51px">Tiling on</div>

<div class="gb" style="left:300px;top:76px;width:294px;height:41px"></div>
<div class="lbl" style="left:307px;top:71px">Horizontal Tiles</div>
<div class="edit" style="left:307px;top:86px;width:41px;height:18px"></div>
<div class="a" style="left:310px;top:89px;color:#6d6d6d;font-family:'Liberation Sans',sans-serif;font-size:12px;line-height:12px">1</div>
<div class="track" style="left:364px;top:92px;width:215px;height:4px"></div>
<div class="thumb" style="left:364px;top:87px;width:6px;height:14px"></div>

<div class="gb" style="left:300px;top:128px;width:294px;height:41px"></div>
<div class="lbl" style="left:307px;top:123px">Vertical Tiles</div>
<div class="edit" style="left:307px;top:139px;width:41px;height:18px"></div>
<div class="a" style="left:310px;top:142px;color:#6d6d6d;font-family:'Liberation Sans',sans-serif;font-size:12px;line-height:12px">1</div>
<div class="track" style="left:364px;top:145px;width:215px;height:4px"></div>
<div class="thumb" style="left:364px;top:140px;width:6px;height:14px"></div>

<!-- Image size group -->
<div class="gb" style="left:7px;top:314px;width:432px;height:147px;border-bottom:none"></div>
<div class="a" style="left:7px;top:417px;width:429px;height:1px;background:#dcdcdc"></div>
<div class="lbl" style="left:14px;top:309px">Image size</div>
<div class="t" style="left:123px;top:323px">Predefined:</div>
<div class="combo" style="left:76px;top:340px;width:156px;height:20px;background:#e1e1e1;border-color:#adadad"></div>
<svg class="chev" style="left:218px;top:347px" width="10" height="7" viewBox="0 0 10 7"><path d="M1 1.5L5 5.5L9 1.5" fill="none" stroke="#444" stroke-width="1.3"/></svg>

<div class="t" style="left:286px;top:325px">Aspect ratio:</div>
<div class="combo" style="left:258px;top:341px;width:156px;height:20px"></div>
<div class="t" style="left:261px;top:345px">1:1 (Square)</div>
<svg class="chev" style="left:400px;top:348px" width="10" height="7" viewBox="0 0 10 7"><path d="M1 1.5L5 5.5L9 1.5" fill="none" stroke="#444" stroke-width="1.3"/></svg>

<div class="t" style="left:51px;top:394px;width:93px;overflow:hidden;direction:rtl">Size (largest dim)</div>
<div class="combo" style="left:151px;top:389px;width:81px;height:20px"></div>
<div class="t" style="left:153px;top:393px">400</div>
<svg class="chev" style="left:217px;top:396px" width="10" height="7" viewBox="0 0 10 7"><path d="M1 1.5L5 5.5L9 1.5" fill="none" stroke="#444" stroke-width="1.3"/></svg>

<div class="a" style="left:240px;top:391px;width:173px;height:17px;border-top:1px solid #a0a0a0;border-left:1px solid #a0a0a0;border-right:1px solid #fff;border-bottom:1px solid #fff"><div style="position:absolute;left:0;top:0;right:0;bottom:0;border-top:1px solid #696969;border-left:1px solid #696969;border-right:1px solid #e3e3e3;border-bottom:1px solid #e3e3e3"></div></div>
<div class="t" style="left:274px;top:394px">400 by 400 pixels</div>

<!-- bottom lines -->


<!-- Image Quality group -->
<div class="gb" style="left:462px;top:314px;width:152px;height:160px;border-bottom:none"></div>
<div class="lbl" style="left:469px;top:309px">Image Quality</div>
<div class="radio" style="left:474px;top:333px"></div>
<div class="t" style="left:489px;top:335px">Normal</div>
<div class="radio" style="left:474px;top:360px"></div>
<div class="a" style="left:477px;top:363px;width:7px;height:7px;border-radius:50%;background:#333"></div>
<div class="t" style="left:489px;top:362px">Medium</div>
<div class="radio" style="left:474px;top:387px"></div>
<div class="t" style="left:489px;top:389px">High</div>
<div class="a" style="left:467px;top:413px;width:56px;height:1px;background:#dcdcdc"></div>
<div class="a" style="left:496px;top:417px;width:1px;height:43px;background:#dcdcdc"></div>

<div class="a" style="left:0;top:460px;width:641px;height:2px;background:#333"></div>
</body></html>
